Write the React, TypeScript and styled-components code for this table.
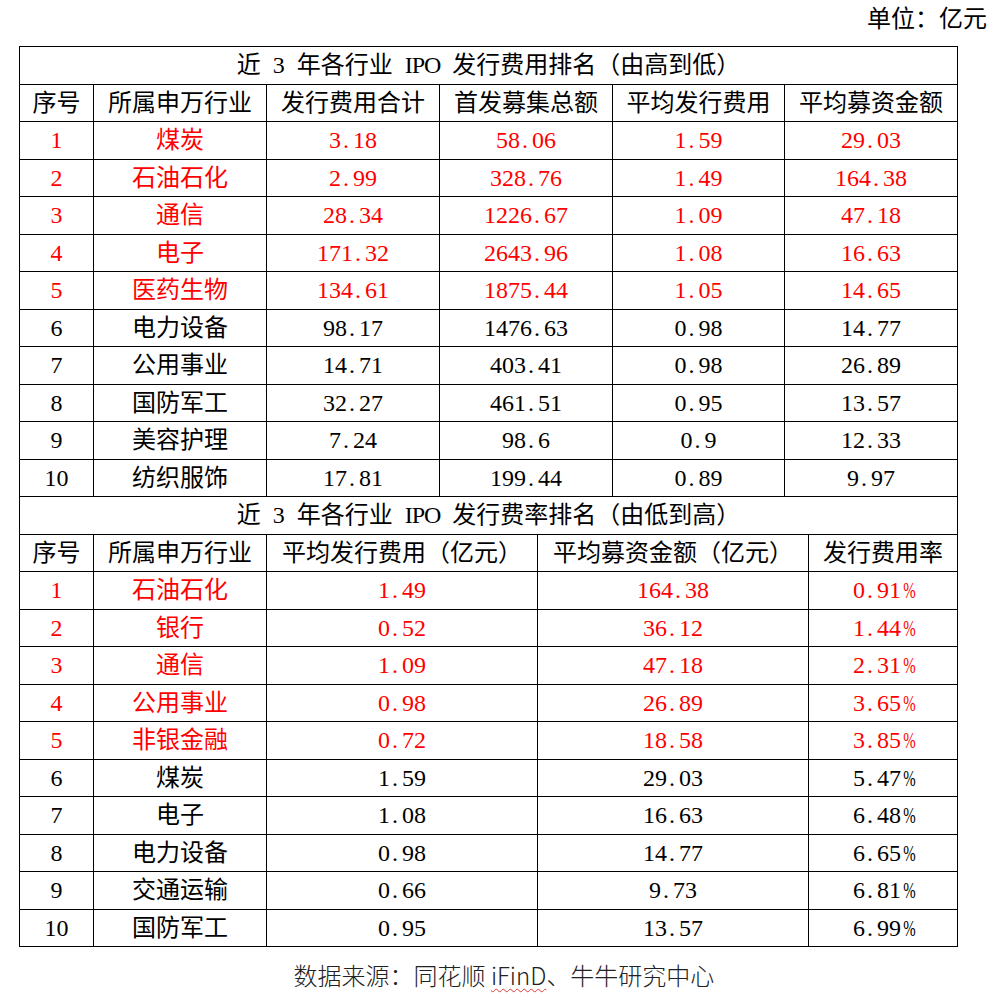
import React from "react";
import styled, { createGlobalStyle, css } from "styled-components";

const Global = createGlobalStyle`
  html, body { margin: 0; padding: 0; background: #fff; }
  body { width: 994px; font-family: "Liberation Serif", "Noto Sans CJK SC", serif; color: #000; }
`;

const Page = styled.div`
  width: 994px;
  display: flex;
  flex-direction: column;
`;

const Unit = styled.div`
  height: 46px;
  line-height: 34px;
  padding-right: 7px;
  text-align: right;
  font-size: 24px;
  font-family: "Noto Sans CJK SC", serif;
`;

const Table = styled.table<{ $first?: boolean }>`
  margin-left: 19px;
  width: 939px;
  border-collapse: collapse;
  table-layout: fixed;
  ${(p) =>
    !p.$first &&
    css`
      margin-top: -1px;
    `}
`;

const Row = styled.tr<{ $red?: boolean }>`
  height: 37.5px;
  color: ${(p) => (p.$red ? "#ff0000" : "#000")};
`;

const Cell = styled.td`
  border: 1px solid #000;
  padding: 0;
  text-align: center;
  vertical-align: middle;
  font-size: 24px;
  line-height: 26px;
  white-space: nowrap;
  font-family: "Liberation Serif", "Noto Sans CJK SC", serif;
`;

const Title = styled(Cell)`
  word-spacing: 6px;
`;

const Latin = styled.span`
  letter-spacing: -1px;
`;

const Glyph = styled.span<{ $kind?: "dot" | "pct" | "digit" }>`
  display: inline-block;
  width: 12px;
  text-align: center;
  ${(p) =>
    p.$kind === "dot" &&
    css`
      text-align: left;
      padding-left: 2px;
      width: 10px;
    `}
  ${(p) =>
    p.$kind === "pct" &&
    css`
      transform: scaleX(0.62);
    `}
`;

const Num = ({ v }: { v: string }) => (
  <>
    {v.split("").map((c, i) => (
      <Glyph key={i} $kind={c === "." ? "dot" : c === "%" ? "pct" : "digit"}>
        {c}
      </Glyph>
    ))}
  </>
);

const Footer = styled.div`
  height: 36px;
  margin-top: 11px;
  line-height: 34px;
  text-align: center;
  padding-left: 14px;
  font-size: 24px;
  color: #222;
  font-family: "Noto Sans CJK SC", sans-serif;
  font-weight: 300;
`;

const Squiggle = styled.span`
  text-decoration: underline wavy #e53935;
  text-decoration-thickness: 1px;
  text-underline-offset: 3px;
`;

const t1: [string, string, string, string, string][] = [
  ["煤炭", "3.18", "58.06", "1.59", "29.03"],
  ["石油石化", "2.99", "328.76", "1.49", "164.38"],
  ["通信", "28.34", "1226.67", "1.09", "47.18"],
  ["电子", "171.32", "2643.96", "1.08", "16.63"],
  ["医药生物", "134.61", "1875.44", "1.05", "14.65"],
  ["电力设备", "98.17", "1476.63", "0.98", "14.77"],
  ["公用事业", "14.71", "403.41", "0.98", "26.89"],
  ["国防军工", "32.27", "461.51", "0.95", "13.57"],
  ["美容护理", "7.24", "98.6", "0.9", "12.33"],
  ["纺织服饰", "17.81", "199.44", "0.89", "9.97"],
];

const t2: [string, string, string, string][] = [
  ["石油石化", "1.49", "164.38", "0.91%"],
  ["银行", "0.52", "36.12", "1.44%"],
  ["通信", "1.09", "47.18", "2.31%"],
  ["公用事业", "0.98", "26.89", "3.65%"],
  ["非银金融", "0.72", "18.58", "3.85%"],
  ["煤炭", "1.59", "29.03", "5.47%"],
  ["电子", "1.08", "16.63", "6.48%"],
  ["电力设备", "0.98", "14.77", "6.65%"],
  ["交通运输", "0.66", "9.73", "6.81%"],
  ["国防军工", "0.95", "13.57", "6.99%"],
];

export default function App() {
  return (
    <Page>
      <Global />
      <Unit>单位：亿元</Unit>
      <Table $first>
        <colgroup>
          <col style={{ width: 74 }} />
          <col style={{ width: 173 }} />
          <col style={{ width: 173 }} />
          <col style={{ width: 173 }} />
          <col style={{ width: 172 }} />
          <col style={{ width: 173 }} />
        </colgroup>
        <tbody>
          <Row>
            <Title colSpan={6}>
              近 <Num v="3" /> 年各行业 <Latin>IPO</Latin> 发行费用排名（由高到低）
            </Title>
          </Row>
          <Row>
            <Cell>序号</Cell>
            <Cell>所属申万行业</Cell>
            <Cell>发行费用合计</Cell>
            <Cell>首发募集总额</Cell>
            <Cell>平均发行费用</Cell>
            <Cell>平均募资金额</Cell>
          </Row>
          {t1.map((r, i) => (
            <Row key={i} $red={i < 5}>
              <Cell>
                <Num v={String(i + 1)} />
              </Cell>
              <Cell>{r[0]}</Cell>
              <Cell>
                <Num v={r[1]} />
              </Cell>
              <Cell>
                <Num v={r[2]} />
              </Cell>
              <Cell>
                <Num v={r[3]} />
              </Cell>
              <Cell>
                <Num v={r[4]} />
              </Cell>
            </Row>
          ))}
        </tbody>
      </Table>
      <Table>
        <colgroup>
          <col style={{ width: 74 }} />
          <col style={{ width: 173 }} />
          <col style={{ width: 271 }} />
          <col style={{ width: 271 }} />
          <col style={{ width: 149 }} />
        </colgroup>
        <tbody>
          <Row>
            <Title colSpan={5}>
              近 <Num v="3" /> 年各行业 <Latin>IPO</Latin> 发行费率排名（由低到高）
            </Title>
          </Row>
          <Row>
            <Cell>序号</Cell>
            <Cell>所属申万行业</Cell>
            <Cell>平均发行费用（亿元）</Cell>
            <Cell>平均募资金额（亿元）</Cell>
            <Cell>发行费用率</Cell>
          </Row>
          {t2.map((r, i) => (
            <Row key={i} $red={i < 5}>
              <Cell>
                <Num v={String(i + 1)} />
              </Cell>
              <Cell>{r[0]}</Cell>
              <Cell>
                <Num v={r[1]} />
              </Cell>
              <Cell>
                <Num v={r[2]} />
              </Cell>
              <Cell>
                <Num v={r[3]} />
              </Cell>
            </Row>
          ))}
        </tbody>
      </Table>
      <Footer>
        数据来源：同花顺 <Squiggle>iFinD</Squiggle>、牛牛研究中心
      </Footer>
    </Page>
  );
}
